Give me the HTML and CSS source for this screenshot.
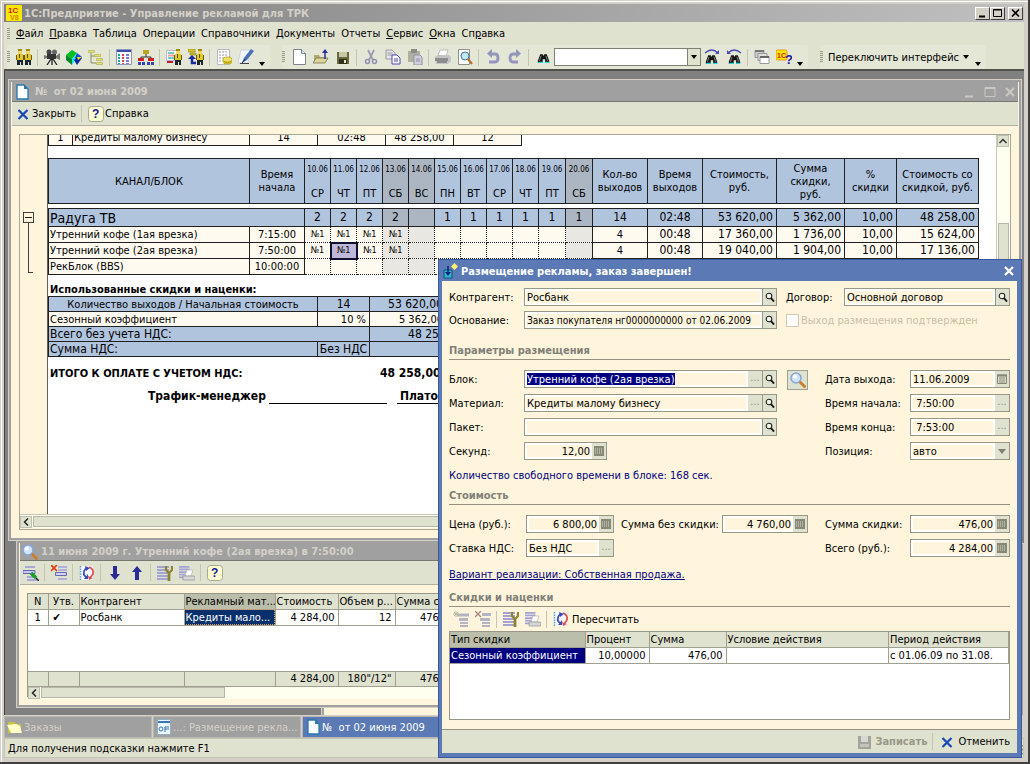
FILE: index.html
```html
<!DOCTYPE html>
<html lang="ru">
<head>
<meta charset="utf-8">
<title>1С:Предприятие - Управление рекламой для ТРК</title>
<link rel="stylesheet" href="styles.css">
</head>
<body>
<svg class="sprite" aria-hidden="true">
  <symbol id="man" viewBox="0 0 8 16"><path d="M1 5h6v6H1z" fill="#e0c828"/><path d="M0 6h1v5H0zM7 6h1v5H7z" fill="#6b5c00"/><path d="M1 11h6v5H5v-3H4v3H1z" fill="#1c2430"/><path d="M2 1h4v4H2z" fill="#f0d860"/><path d="M2 0h4v2H2z" fill="#a08a10"/><path d="M3 5h1v4H3z" fill="#585020"/></symbol>
  <symbol id="people" viewBox="0 0 16 16"><use href="#man" x="0" y="0" width="8" height="16"/><use href="#man" x="8" y="0" width="8" height="16"/></symbol>
  <symbol id="camera" viewBox="0 0 16 16"><circle cx="5" cy="3" r="2.5" fill="#444"/><circle cx="10.500" cy="3" r="2.500" fill="#666"/><path d="M3 5h9v5H3z" fill="#333"/><path d="M12 7l4-3v7l-4-2zM0 6l3 1v2l-3 1z" fill="#777"/><path d="M7 10L3 16M8 10v6M9 10l4 6" stroke="#222" stroke-width="1.300"/></symbol>
  <symbol id="cube" viewBox="0 0 16 16"><path d="M0 6l6-5 5 3-5 6z" fill="#00c020"/><path d="M0 6l6 4v6l-6-5z" fill="#008828"/><path d="M6 10l5-6v5l-5 7z" fill="#20e8f0"/><path d="M11 4l5 4-3 4-4-3z" fill="#1848e0"/><path d="M8 11l4-3 4 1-5 7z" fill="#0a28a0"/><path d="M11 8h5l-4 3z" fill="#f0e000"/></symbol>
  <symbol id="tree" viewBox="0 0 16 16"><path d="M3 4v10h5M3 7h5" fill="none" stroke="#8c8a60"/><path d="M.5 1.500h6v2h-6zM6.500 5.500h6v2h-6zM8.500 9.500h6v2h-6zM8.500 13.500h6v2h-6z" fill="#e6e268" stroke="#a8a650" stroke-width=".6"/></symbol>
  <symbol id="grid" viewBox="0 0 16 16"><path d="M.5.5h15v15H.5z" fill="#fff" stroke="#8c98c0"/><path d="M1 1h14v2H1z" fill="#3d4ba8"/><path d="M3 5v10" stroke="#20a898" stroke-width="2" stroke-dasharray="2 1"/><path d="M7 5v10" stroke="#d84050" stroke-width="2" stroke-dasharray="2 1"/><path d="M11.500 5v10" stroke="#8078d8" stroke-width="3" stroke-dasharray="2 1"/></symbol>
  <symbol id="org" viewBox="0 0 16 16"><path d="M8 4v4M3 11V8h10v3" fill="none" stroke="#333"/><path d="M5 1h6v4H5z" fill="#b8a820"/><path d="M0 9h6v3H0zM10 9h6v3h-6z" fill="#d02020"/><path d="M0 13h3v3H0zM4 13h3v3H4zM9 13h3v3H9zM13 13h3v3h-3z" fill="#3444c0"/></symbol>
  <symbol id="gridman" viewBox="0 0 16 16"><path d="M.5 1.500h10v10H.5z" fill="#fff" stroke="#b8b8d8"/><path d="M2 4h6M2 9h6" stroke="#70d0c0" stroke-width="2"/><path d="M2 6.500h6" stroke="#f0a0a8" stroke-width="2"/><path d="M1 13h6" stroke="#c02020" stroke-width="2"/><use href="#man" x="8" y="0" width="8" height="16"/></symbol>
  <symbol id="treeman" viewBox="0 0 16 16"><path d="M0 0h7v3H0zM2 4h6v2H2z" fill="#d6c62a" stroke="#8a7c10" stroke-width=".6"/><path d="M4 8v6h4" fill="none" stroke="#1828a0" stroke-width="2.500"/><path d="M0 10l4-4 4 4z" fill="#1828a0"/><use href="#man" x="8" y="0" width="8" height="16"/></symbol>
  <symbol id="listcoin" viewBox="0 0 16 16"><path d="M1.500.5h12v15h-12z" fill="#fff" stroke="#b8b8c4"/><path d="M3 3h9M3 6h9M3 9h5M3 12h4" stroke="#9898a8" stroke-dasharray="2 1"/><ellipse cx="11.500" cy="13" rx="4.500" ry="2.500" fill="#c8b420"/><ellipse cx="11.500" cy="10.500" rx="4.500" ry="2.500" fill="#f0e060" stroke="#a89010" stroke-width=".7"/></symbol>
  <symbol id="pen" viewBox="0 0 16 16"><path d="M3 1h9l-2 13H0z" fill="#f2f6fc" stroke="#b8c0d0" stroke-width=".6"/><path d="M13 0l3 2-7 9-5 3 2-5z" fill="#4870b8"/><path d="M4 14l3-4" stroke="#142850"/><path d="M2 14.500h9" stroke="#444"/></symbol>
  <symbol id="doc" viewBox="0 0 16 16"><path d="M2.500.5h8l4 4v11h-12z" fill="#fff" stroke="#7c8494"/><path d="M10.500.5v4h4" fill="#dde4ee" stroke="#7c8494"/></symbol>
  <symbol id="bluedoc" viewBox="0 0 16 16"><path d="M3 1h7l4 4v10H3z" fill="#fff" stroke="#2878b0" stroke-width="1.300"/><path d="M10 1v4h4z" fill="#2878b0"/></symbol>
  <symbol id="open" viewBox="0 0 16 16"><path d="M1 13V6h5l1 2h6v5z" fill="#b0aa70"/><path d="M0 14l3-5h12l-3 5z" fill="#d8d49c" stroke="#706c40" stroke-width=".7"/><path d="M12 10V3" stroke="#2830a0" stroke-width="1.500"/><path d="M9 4l3-4 3 4z" fill="#2830a0"/></symbol>
  <symbol id="save" viewBox="0 0 16 16"><path d="M2 3h12v12H2z" fill="#68683c"/><path d="M4 3h8v5H4z" fill="#c8c8a8"/><path d="M4 10h8v5H4z" fill="#303018"/><path d="M9 11h2v3H9z" fill="#e8e8d8"/></symbol>
  <symbol id="cut" viewBox="0 0 16 16"><path d="M5 1l5 10M11 1L6 11" stroke="#9a9aae" stroke-width="1.700"/><circle cx="4.500" cy="12.500" r="2" fill="none" stroke="#9090b0" stroke-width="1.500"/><circle cx="11.500" cy="12.500" r="2" fill="none" stroke="#9090b0" stroke-width="1.500"/></symbol>
  <symbol id="copy" viewBox="0 0 16 16"><path d="M1 1h6l3 3v6H1z" fill="#e6e6e6" stroke="#9a9a9a"/><path d="M2.500 4h5M2.500 6h5" stroke="#9a9a9a"/><path d="M7 6h5l3 3v6H7z" fill="#fff" stroke="#4848b0"/><path d="M9 10h4M9 12h4" stroke="#4848b0"/></symbol>
  <symbol id="paste" viewBox="0 0 16 16"><path d="M1 2h12v11H1z" fill="#b0b0a0"/><path d="M4 0h6v4H4z" fill="#8c8c80"/><path d="M7 6h6l2 2v8H7z" fill="#d0d0dc" stroke="#9090a8"/><path d="M9 10h4M9 12h4" stroke="#9090a8"/></symbol>
  <symbol id="print" viewBox="0 0 16 16"><path d="M5 1h8l-2 6H3z" fill="#fff" stroke="#aaa" stroke-width=".7"/><path d="M0 8l3-2h11l2 2v4l-3 3H1z" fill="#c4c4c4"/><path d="M0 9h13v3H0z" fill="#8c8c8c"/><path d="M2 13h10" stroke="#555"/></symbol>
  <symbol id="preview" viewBox="0 0 16 16"><path d="M1.500.5h11v15h-11z" fill="#fff" stroke="#909090"/><circle cx="8" cy="7" r="4" fill="#b8ecf0" stroke="#507090"/><path d="M11 10l4 5" stroke="#c07030" stroke-width="2.200"/></symbol>
  <symbol id="undo" viewBox="0 0 16 16"><path d="M7 0v9L2 4.500z" fill="#9494bc"/><path d="M6 5h4q3 0 3 4t-3 4H4" fill="none" stroke="#9494bc" stroke-width="2.800"/></symbol>
  <symbol id="redo" viewBox="0 0 16 16"><path d="M9 0v9l5-4.500z" fill="#9494bc"/><path d="M10 5H6q-3 0-3 4t3 4h5" fill="none" stroke="#9494bc" stroke-width="2.800"/></symbol>
  <symbol id="bino" viewBox="0 0 16 16"><path d="M4 4h3l1 2 1-2h3l3 8v2h-5v-4H7v4H1v-2z" fill="#141414"/><path d="M5 6l-2 6M11 6l2 6" stroke="#999"/><path d="M2 14h5M10 14h5" stroke="#18d8e0" stroke-width="1.500"/></symbol>
  <symbol id="binor" viewBox="0 0 16 16"><use href="#bino" x="1" y="3" width="13" height="13"/><path d="M1 4q7-6 13 0" fill="none" stroke="#4848b8" stroke-width="1.200"/><path d="M15 1v4h-4z" fill="#4848b8"/></symbol>
  <symbol id="binol" viewBox="0 0 16 16"><use href="#bino" x="2" y="3" width="13" height="13"/><path d="M2 4q6-6 13 0" fill="none" stroke="#4848b8" stroke-width="1.200"/><path d="M1 1v4h4z" fill="#4848b8"/></symbol>
  <symbol id="wins" viewBox="0 0 16 16"><path d="M1 1.500h9v7H1z" fill="#ccc" stroke="#999"/><path d="M1 1h9v2H1z" fill="#777"/><path d="M4 4.500h9v7H4z" fill="#ddd" stroke="#999"/><path d="M6 7.500h9v7H6z" fill="#fff" stroke="#999"/><path d="M6 7h9v2H6z" fill="#666"/></symbol>
  <symbol id="onecq" viewBox="0 0 16 16"><rect x="0" y="1" width="11" height="10" rx="1.500" fill="#ffe600" stroke="#e08a00" stroke-width=".8"/><text x="1" y="9" class="logo-s">1С</text><text x="9" y="15" class="logo-q">?</text></symbol>
  <symbol id="onec" viewBox="0 0 16 16"><rect width="16" height="16" rx="1" fill="#ffe600"/><text x="2" y="8" class="logo-t">1С</text><text x="4" y="15" class="logo-v">V8</text></symbol>
  <symbol id="cross" viewBox="0 0 16 16"><path d="M3.500 4l9 9M12.500 4l-9 9" stroke="currentColor" stroke-width="2.200"/></symbol>
  <symbol id="help" viewBox="0 0 16 16"><rect x=".5" y=".5" width="15" height="15" rx="3" fill="#ffffd0" stroke="#a8a898"/><text x="4" y="12" class="helpq">?</text></symbol>
  <symbol id="mag" viewBox="0 0 16 16"><path d="M9.500 9.500l5 5" stroke="#c88030" stroke-width="3" stroke-linecap="round"/><circle cx="6" cy="6" r="5" fill="#cfe4ff" stroke="#88a4d8" stroke-width="1.500"/><circle cx="5" cy="4.500" r="2" fill="#fff"/></symbol>
  <symbol id="lens" viewBox="0 0 10 10"><circle cx="4" cy="4" r="2.800" fill="#f4f4ea" stroke="#222" stroke-width="1.100"/><path d="M6 6l3 3.500" stroke="#111" stroke-width="1.900"/></symbol>
  <symbol id="rows" viewBox="0 0 16 16"><path d="M0 2h12M0 5h12M0 8h12M0 11h12M0 14h12" stroke="#a4a4d4" stroke-width="2"/></symbol>
  <symbol id="editrow" viewBox="0 0 16 16"><path d="M2 2h10M4 12h8M4 15h10" stroke="#a8a8d8" stroke-width="2"/><path d="M0 5.500h12v3H0z" fill="#c8c8ec" stroke="#6868b0"/><path d="M8 8l5 5" stroke="#18a028" stroke-width="3.500"/><path d="M13 13l3 3" stroke="#222" stroke-width="1.500"/></symbol>
  <symbol id="delrow" viewBox="0 0 16 16"><path d="M7 2h9M7 5h9M7 14h9" stroke="#b0b0dc" stroke-width="2"/><path d="M4.500 7.500h11v3h-11z" fill="#d0d0f0" stroke="#6868b0"/><path d="M0 0l6 6M6 0L0 6" stroke="#e03c10" stroke-width="1.700"/></symbol>
  <symbol id="addrowd" viewBox="0 0 16 16"><path d="M4 2.500h12v3H4zM6 7h9v3H6zM7 11h8v2H7zM7 14h8v2H7z" fill="#b4b4c4"/><path d="M0 3h6M3 0v6M1 1l4 4M5 1L1 5" stroke="#bcbc9c"/></symbol>
  <symbol id="delrowd" viewBox="0 0 16 16"><path d="M7 2h9v3H7zM5 7h10v3H5zM7 11h8v2H7zM7 14h8v2H7z" fill="#b4b4c4"/><path d="M0 0l6 6M6 0L0 6" stroke="#a88c84" stroke-width="1.400"/></symbol>
  <symbol id="refresh" viewBox="0 0 16 16"><path d="M1 1h13v14H1z" fill="#f8faff"/><path d="M1.500 1v14" stroke="#5aa0d0" stroke-width="1.500" stroke-dasharray="1.500 1"/><path d="M8 3Q4 5 5 10l3 3" fill="none" stroke="#3848c0" stroke-width="1.700"/><path d="M6 1l5 2-4 3zM5 14l4 0V9z" fill="#3848c0"/><path d="M10 2q5 2 4 7l-3 4" fill="none" stroke="#e05050" stroke-width="1.700"/><path d="M9 11l1 4 4-2z" fill="#e05050"/></symbol>
  <symbol id="down" viewBox="0 0 16 16"><path d="M6 1h4v8h3l-5 6-5-6h3z" fill="#2a2a98"/></symbol>
  <symbol id="up" viewBox="0 0 16 16"><path d="M6 15h4V7h3L8 1 3 7h3z" fill="#2a2a98"/></symbol>
  <symbol id="wrench" viewBox="0 0 16 16"><use href="#rows" width="16" height="16"/><path d="M12 7v9" stroke="#8c8430" stroke-width="2.800"/><path d="M9 1v4l3 3 3-3V1" fill="none" stroke="#8c8430" stroke-width="2.200"/></symbol>
  <symbol id="rowprint" viewBox="0 0 16 16"><use href="#rows" width="14" height="14"/><path d="M8 5h6l-2 6H6z" fill="#fff" stroke="#aaa" stroke-width=".6"/><path d="M4 11h11l1 1v3H4z" fill="#d4d8d8" stroke="#909090" stroke-width=".7"/></symbol>
  <symbol id="calc" viewBox="0 0 10 10"><path d="M0 0h10v10H0z" fill="#888878"/><path d="M1 3h8M1 5h8M1 7h8" stroke="#ddddc8" stroke-dasharray="1 1"/></symbol>
  <symbol id="cal" viewBox="0 0 10 10"><path d="M.5 1h9v8.500h-9z" fill="#d6d6c2" stroke="#888878"/><path d="M0 1.500h10" stroke="#888878" stroke-width="2"/><path d="M3 3v6M5 3v6M7 3v6" stroke="#888878" stroke-width=".8"/></symbol>
  <symbol id="folder" viewBox="0 0 16 16"><path d="M1 3h6l2 2h5v9H1z" fill="#c8c440"/><path d="M0 6l4 8h11l-2-7-4-2z" fill="#ffffc8"/></symbol>
  <symbol id="form" viewBox="0 0 16 16"><path d="M1.500.5h13v15h-13z" fill="#eef8ff" stroke="#90b0c8"/><path d="M2 3h12" stroke="#3478b8" stroke-width="2"/><circle cx="5" cy="10" r="2" fill="none" stroke="#3478b8"/><path d="M9 8h4M9 8v5M9 10h4" stroke="#3478b8"/></symbol>
  <symbol id="disk" viewBox="0 0 16 16"><path d="M2 2h13v13H2z" fill="#a4a49c"/><path d="M5 2h7v6H5z" fill="#d8d8d0"/><path d="M4 10h9v3H4z" fill="#c4c4bc"/></symbol>
  <symbol id="place" viewBox="0 0 16 16"><path d="M1 7h8v8H1z" fill="#30b8c8" stroke="#105080"/><path d="M5 3v8" stroke="#102080" stroke-width="1.500"/><path d="M2 9l3 4 3-4z" fill="#102080"/><path d="M11.500 0L15 3.500 11.500 7 8 3.500z" fill="#f8f070"/></symbol>
</svg>

<main class="app">
  <header class="titlebar">
    <svg class="ic"><use href="#onec"/></svg>
    <h1 class="caption">1С:Предприятие - Управление рекламой для ТРК</h1>
    <div class="winbtns">
      <button aria-label="Свернуть"><svg viewBox="0 0 15 13"><path d="M4 9.500h6" stroke="#000" stroke-width="2"/></svg></button>
      <button aria-label="Развернуть"><svg viewBox="0 0 15 13"><path d="M3.500 2.500h8v7h-8zM3 3h9" fill="none" stroke="#000"/></svg></button>
      <button class="closebtn" aria-label="Закрыть окно"><svg viewBox="0 0 15 13"><path d="M4 2.500l7 7M11 2.500l-7 7" stroke="#000" stroke-width="1.600"/></svg></button>
    </div>
  </header>

  <nav class="menubar">
    <span class="grip"></span>
    <button><u>Ф</u>айл</button><button><u>П</u>равка</button><button>Таблица</button><button>Операции</button><button>Справочники</button><button>Документы</button><button>Отчеты</button><button><u>С</u>ервис</button><button><u>О</u>кна</button><button>Сп<u>р</u>авка</button>
  </nav>

  <div class="toolrow">
    <div class="tools">
      <span class="grip"></span>
      <button class="tb" aria-label="Контрагенты"><svg class="ic"><use href="#people"/></svg></button><i class="sep"></i>
      <button class="tb" aria-label="Материалы"><svg class="ic"><use href="#camera"/></svg></button>
      <button class="tb" aria-label="Блоки"><svg class="ic"><use href="#cube"/></svg></button>
      <button class="tb" aria-label="Дерево"><svg class="ic"><use href="#tree"/></svg></button><i class="sep"></i>
      <button class="tb" aria-label="Сетка"><svg class="ic"><use href="#grid"/></svg></button>
      <button class="tb" aria-label="Структура"><svg class="ic"><use href="#org"/></svg></button><i class="sep"></i>
      <button class="tb" aria-label="Заказы"><svg class="ic"><use href="#gridman"/></svg></button>
      <button class="tb" aria-label="Размещение"><svg class="ic"><use href="#treeman"/></svg></button><i class="sep"></i>
      <button class="tb" aria-label="Оплаты"><svg class="ic"><use href="#listcoin"/></svg></button>
      <button class="tb" aria-label="Правка"><svg class="ic"><use href="#pen"/></svg></button>
      <button class="more" aria-label="Ещё"></button>
    </div>
    <div class="tools">
      <span class="grip"></span>
      <button class="tb" aria-label="Новый"><svg class="ic"><use href="#doc"/></svg></button>
      <button class="tb" aria-label="Открыть"><svg class="ic"><use href="#open"/></svg></button>
      <button class="tb" aria-label="Сохранить"><svg class="ic"><use href="#save"/></svg></button><i class="sep"></i>
      <button class="tb" aria-label="Вырезать"><svg class="ic"><use href="#cut"/></svg></button>
      <button class="tb" aria-label="Копировать"><svg class="ic"><use href="#copy"/></svg></button>
      <button class="tb" aria-label="Вставить"><svg class="ic"><use href="#paste"/></svg></button><i class="sep"></i>
      <button class="tb" aria-label="Печать"><svg class="ic"><use href="#print"/></svg></button>
      <button class="tb" aria-label="Просмотр"><svg class="ic"><use href="#preview"/></svg></button><i class="sep"></i>
      <button class="tb" aria-label="Отменить действие"><svg class="ic"><use href="#undo"/></svg></button>
      <button class="tb" aria-label="Повторить"><svg class="ic"><use href="#redo"/></svg></button><i class="sep"></i>
      <button class="tb" aria-label="Найти"><svg class="ic small"><use href="#bino"/></svg></button>
      <span class="combo"><input aria-label="Поиск"><button aria-label="Список"></button></span>
      <button class="tb" aria-label="Найти далее"><svg class="ic"><use href="#binor"/></svg></button>
      <button class="tb" aria-label="Найти ранее"><svg class="ic"><use href="#binol"/></svg></button><i class="sep"></i>
      <button class="tb" aria-label="Окна"><svg class="ic"><use href="#wins"/></svg></button>
      <button class="tb" aria-label="Помощь"><svg class="ic"><use href="#onecq"/></svg></button>
      <button class="more" aria-label="Ещё"></button>
    </div>
    <div class="tools">
      <span class="grip"></span>
      <button class="switch">Переключить интерфейс</button>
      <button class="more" aria-label="Ещё"></button>
    </div>
  </div>

  <section class="mdi">
    <div class="win back"></div>

    <article class="win doc">
      <header class="wintitle"><svg class="ic"><use href="#bluedoc"/></svg><h2>№&nbsp; от 02 июня 2009</h2>
        <div class="flatbtns">
          <button aria-label="Свернуть документ"><svg viewBox="0 0 12 12"><path d="M1 10.500h8" stroke="#ccc8c0" stroke-width="2"/></svg></button>
          <button aria-label="Развернуть документ"><svg viewBox="0 0 12 12"><path d="M1 1.500h10v9H1zM1 2.500h10" fill="none" stroke="#ccc8c0"/></svg></button>
          <button aria-label="Закрыть документ"><svg viewBox="0 0 12 12"><path d="M2 2l8 8M10 2l-8 8" stroke="#ccc8c0" stroke-width="2"/></svg></button>
        </div>
      </header>
      <div class="winbar">
        <button class="txt first"><svg class="ic blue"><use href="#cross"/></svg>Закрыть</button><i class="sep"></i>
        <button class="txt tight"><svg class="ic"><use href="#help"/></svg>Справка</button>
      </div>
      <div class="docbody">
        <div class="sheetbox">
          <div class="outline"><button aria-label="Свернуть группу"></button><i></i></div>
          <div class="sheet">
            <table class="cells cut">
              <colgroup><col class="c24"><col class="c177"><col class="c68"><col class="c68"><col class="c68"><col class="c68"></colgroup>
              <tr><td class="c">1</td><td>Кредиты малому бизнесу</td><td class="c">14</td><td class="c">02:48</td><td class="c">48 258,00</td><td class="c">12</td></tr>
            </table>
            <table class="cells plan">
              <colgroup><col class="c201"><col class="c55"><col span="9" class="c26"><col span="2" class="c27"><col class="c55"><col class="c55"><col class="c74"><col class="c68"><col class="c52"><col class="c82"></colgroup>
              <thead>
                <tr><th>КАНАЛ/БЛОК</th><th>Время начала</th>
                  <th class="d"><span>10.06</span>СР</th><th class="d"><span>11.06</span>ЧТ</th><th class="d"><span>12.06</span>ПТ</th><th class="d we"><span>13.06</span>СБ</th><th class="d we"><span>14.06</span>ВС</th><th class="d"><span>15.06</span>ПН</th><th class="d"><span>16.06</span>ВТ</th><th class="d"><span>17.06</span>СР</th><th class="d"><span>18.06</span>ЧТ</th><th class="d"><span>19.06</span>ПТ</th><th class="d we"><span>20.06</span>СБ</th>
                  <th>Кол-во выходов</th><th>Время выходов</th><th>Стоимость, руб.</th><th>Сумма<br>скидки,<br>руб.</th><th>%<br>скидки</th><th>Стоимость со скидкой, руб.</th></tr>
              </thead>
              <tbody>
                <tr class="gap"><td colspan="19"></td></tr>
                <tr class="sum"><td colspan="2" class="big">Радуга ТВ</td><td>2</td><td>2</td><td>2</td><td class="we">2</td><td class="we"></td><td>1</td><td>1</td><td>1</td><td>1</td><td>1</td><td class="we">1</td><td>14</td><td>02:48</td><td class="r">53 620,00</td><td class="r">5 362,00</td><td class="r">10,00</td><td class="r">48 258,00</td></tr>
                <tr class="row"><td>Утренний кофе (1ая врезка)</td><td class="c">7:15:00</td><td class="n">№1</td><td class="n">№1</td><td class="n">№1</td><td class="n we">№1</td><td class="n we"></td><td class="n"></td><td class="n"></td><td class="n"></td><td class="n"></td><td class="n"></td><td class="n we"></td><td class="c">4</td><td class="c v">00:48</td><td class="r v">17 360,00</td><td class="r v">1 736,00</td><td class="r v">10,00</td><td class="r v">15 624,00</td></tr>
                <tr class="row"><td>Утренний кофе (2ая врезка)</td><td class="c">7:50:00</td><td class="n">№1</td><td class="n cur">№1</td><td class="n">№1</td><td class="n we">№1</td><td class="n we"></td><td class="n"></td><td class="n"></td><td class="n"></td><td class="n"></td><td class="n"></td><td class="n we"></td><td class="c">4</td><td class="c v">00:48</td><td class="r v">19 040,00</td><td class="r v">1 904,00</td><td class="r v">10,00</td><td class="r v">17 136,00</td></tr>
                <tr class="row"><td>РекБлок (BBS)</td><td class="c">10:00:00</td><td class="n"></td><td class="n"></td><td class="n"></td><td class="n we"></td><td class="n we"></td><td class="n"></td><td class="n"></td><td class="n"></td><td class="n"></td><td class="n"></td><td class="n we"></td><td></td><td></td><td></td><td></td><td></td><td></td></tr>
              </tbody>
            </table>
            <h3 class="sh">Использованные скидки и наценки:</h3>
            <table class="cells totals">
              <colgroup><col class="c269"><col class="c52"><col class="c77"><col class="c20"></colgroup>
              <tr class="b"><td class="c">Количество выходов / Начальная стоимость</td><td class="c v">14</td><td class="r v">53 620,00</td><td></td></tr>
              <tr><td>Сезонный коэффициент</td><td class="r">10 %</td><td class="r">5 362,00</td><td></td></tr>
              <tr class="b"><td colspan="2" class="v">Всего без учета НДС:</td><td colspan="2" class="r v">48 258,00</td></tr>
              <tr class="b"><td class="v">Сумма НДС:</td><td class="v c">Без НДС</td><td colspan="2"></td></tr>
            </table>
            <p class="grand"><b>ИТОГО К ОПЛАТЕ С УЧЕТОМ НДС:</b><b class="v">48 258,00</b></p>
            <p class="sign"><b>Трафик-менеджер</b><i></i><b class="payer">Платов</b></p>
          </div>
          <div class="vscroll"><button aria-label="Вверх"><svg viewBox="0 0 12 12"><path d="M2.500 8L6 4.500 9.500 8" fill="none" stroke="#333" stroke-width="1.500"/></svg></button><span></span></div>
          <div class="hscroll"><button aria-label="Влево"><svg viewBox="0 0 12 12"><path d="M8 2.500L4.500 6 8 9.500" fill="none" stroke="#222" stroke-width="1.500"/></svg></button><span></span></div>
        </div>
      </div>
    </article>

    <article class="win list">
      <header class="wintitle"><svg class="ic"><use href="#mag"/></svg><h2>11 июня 2009 г. Утренний кофе (2ая врезка) в 7:50:00</h2></header>
      <div class="winbar">
        <button class="tb" aria-label="Изменить"><svg class="ic"><use href="#editrow"/></svg></button><i class="sep"></i>
        <button class="tb" aria-label="Удалить"><svg class="ic"><use href="#delrow"/></svg></button><i class="sep"></i>
        <button class="tb" aria-label="Обновить"><svg class="ic"><use href="#refresh"/></svg></button><i class="sep"></i>
        <button class="tb" aria-label="Вниз"><svg class="ic"><use href="#down"/></svg></button>
        <button class="tb" aria-label="Вверх по списку"><svg class="ic"><use href="#up"/></svg></button><i class="sep"></i>
        <button class="tb" aria-label="Настройка"><svg class="ic"><use href="#wrench"/></svg></button>
        <button class="tb" aria-label="Вывести"><svg class="ic"><use href="#rowprint"/></svg></button><i class="sep"></i>
        <button class="tb" aria-label="Справка по списку"><svg class="ic"><use href="#help"/></svg></button>
      </div>
      <div class="listbody">
        <div class="listbox">
          <table class="grid">
            <colgroup><col class="c20"><col class="c31"><col class="c105"><col class="c91"><col class="c63"><col class="c57"><col class="c63"><col></colgroup>
            <thead><tr><th class="c">N</th><th class="c">Утв.</th><th>Контрагент</th><th class="act">Рекламный мат...</th><th>Стоимость</th><th>Объем р...</th><th>Сумма ск...</th><th></th></tr></thead>
            <tbody><tr><td class="c">1</td><td class="tick">✔</td><td>Росбанк</td><td class="sel">Кредиты мало...</td><td class="r">4 284,00</td><td class="r">12</td><td class="r">476,00</td><td></td></tr></tbody>
            <tfoot><tr class="blank"><td colspan="8"></td></tr><tr><td></td><td></td><td></td><td></td><td class="r">4 284,00</td><td class="r">180"/12"</td><td class="r">476,00</td><td></td></tr></tfoot>
          </table>
          <div class="hscroll part"><button aria-label="Влево по списку"><svg viewBox="0 0 12 12"><path d="M8 2.500L4.500 6 8 9.500" fill="none" stroke="#222" stroke-width="1.500"/></svg></button><span></span></div>
        </div>
      </div>
    </article>
  </section>

  <nav class="taskbar">
    <button><svg class="ic"><use href="#folder"/></svg>Заказы</button>
    <button><svg class="ic"><use href="#form"/></svg>...: Размещение рекла...</button>
    <button class="on"><svg class="ic"><use href="#bluedoc"/></svg>№&nbsp; от 02 июня 2009</button>
  </nav>
  <footer class="status"><span>Для получения подсказки нажмите F1</span>
    <svg viewBox="0 0 12 12"><path d="M0 12L12 0M4 12l8-8M8 12l4-4" stroke="#8a8878" stroke-width="1.500"/></svg></footer>

  <form class="dialog" onsubmit="return false">
    <header class="dlgtitle"><svg class="ic"><use href="#place"/></svg><h2>Размещение рекламы, заказ завершен!</h2>
      <button type="button" aria-label="Закрыть форму"><svg viewBox="0 0 12 12"><path d="M2 2l8 8M10 2l-8 8" stroke="#fff" stroke-width="2.200"/></svg></button></header>
    <div class="dlgbody">
      <div class="top">
        <label for="f1">Контрагент:</label>
        <span class="field"><input id="f1" value="Росбанк"><button type="button" aria-label="Открыть контрагента"><svg><use href="#lens"/></svg></button></span>
        <label for="f2">Договор:</label>
        <span class="field"><input id="f2" value="Основной договор"><button type="button" aria-label="Открыть договор"><svg><use href="#lens"/></svg></button></span>
        <label for="f3">Основание:</label>
        <span class="field long"><input id="f3" value="Заказ покупателя нг0000000000 от 02.06.2009"><button type="button" aria-label="Открыть основание"><svg><use href="#lens"/></svg></button></span>
        <label class="check"><input type="checkbox" disabled>Выход размещения подтвержден</label>
      </div>

      <h3>Параметры размещения</h3>
      <div class="params">
        <div class="pl">
          <label for="p1">Блок:</label>
          <span class="field"><input id="p1" value="Утренний кофе (2ая врезка)"><button type="button" class="dots" aria-label="Выбрать блок">...</button><button type="button" aria-label="Открыть блок"><svg><use href="#lens"/></svg></button></span>
          <label for="p2">Материал:</label>
          <span class="field"><input id="p2" value="Кредиты малому бизнесу"><button type="button" class="dots" aria-label="Выбрать материал">...</button><button type="button" aria-label="Открыть материал"><svg><use href="#lens"/></svg></button></span>
          <label for="p3">Пакет:</label>
          <span class="field"><input id="p3"><button type="button" aria-label="Открыть пакет"><svg><use href="#lens"/></svg></button></span>
          <label for="p4">Секунд:</label>
          <span class="field num short"><input id="p4" value="12,00"><button type="button" class="dim" aria-label="Калькулятор секунд"><svg><use href="#calc"/></svg></button></span>
        </div>
        <button type="button" class="find" aria-label="Найти блок"><svg class="ic"><use href="#mag"/></svg></button>
        <div class="pr">
          <label for="q1">Дата выхода:</label>
          <span class="field"><input id="q1" value="11.06.2009"><button type="button" class="dim" aria-label="Календарь"><svg><use href="#cal"/></svg></button></span>
          <label for="q2">Время начала:</label>
          <span class="field"><input id="q2" value=" 7:50:00"><button type="button" class="dots" aria-label="Выбрать начало">...</button></span>
          <label for="q3">Время конца:</label>
          <span class="field"><input id="q3" value=" 7:53:00"><button type="button" class="dots" aria-label="Выбрать конец">...</button></span>
          <label for="q4">Позиция:</label>
          <span class="field pick"><select id="q4"><option>авто</option></select></span>
        </div>
      </div>
      <p class="info">Количество свободного времени в блоке: 168 сек.</p>

      <h3>Стоимость</h3>
      <div class="cost">
        <label for="c1">Цена (руб.):</label>
        <span class="field num"><input id="c1" value="6 800,00"><button type="button" class="dim" aria-label="Калькулятор цены"><svg><use href="#calc"/></svg></button></span>
        <label for="c2">Сумма без скидки:</label>
        <span class="field num"><input id="c2" value="4 760,00"><button type="button" class="dim" aria-label="Калькулятор суммы"><svg><use href="#calc"/></svg></button></span>
        <label for="c3">Сумма скидки:</label>
        <span class="field num"><input id="c3" value="476,00"><button type="button" class="dim" aria-label="Калькулятор скидки"><svg><use href="#calc"/></svg></button></span>
        <label for="c4">Ставка НДС:</label>
        <span class="field"><input id="c4" value="Без НДС"><button type="button" class="dots" aria-label="Выбрать ставку">...</button></span>
        <label for="c5" class="col5">Всего (руб.):</label>
        <span class="field num"><input id="c5" value="4 284,00"><button type="button" class="dim" aria-label="Калькулятор итога"><svg><use href="#calc"/></svg></button></span>
      </div>
      <p class="variant"><a href="#">Вариант реализации: Собственная продажа.</a></p>

      <h3>Скидки и наценки</h3>
      <div class="dtools">
        <button type="button" class="tb" aria-label="Добавить"><svg class="ic"><use href="#addrowd"/></svg></button>
        <button type="button" class="tb" aria-label="Удалить скидку"><svg class="ic"><use href="#delrowd"/></svg></button><i class="sep"></i>
        <button type="button" class="tb" aria-label="Настройка списка"><svg class="ic"><use href="#wrench"/></svg></button>
        <button type="button" class="tb" aria-label="Вывести список"><svg class="ic"><use href="#rowprint"/></svg></button><i class="sep"></i>
        <button type="button" class="txt"><svg class="ic"><use href="#refresh"/></svg>Пересчитать</button>
      </div>
      <div class="dgrid">
        <table class="grid">
          <colgroup><col class="c135"><col class="c64"><col class="c77"><col><col class="c120"></colgroup>
          <thead><tr><th class="act">Тип скидки</th><th>Процент</th><th>Сумма</th><th>Условие действия</th><th>Период действия</th></tr></thead>
          <tbody><tr><td class="sel">Сезонный коэффициент</td><td class="r">10,00000</td><td class="r">476,00</td><td></td><td>с 01.06.09 по 31.08.</td></tr></tbody>
        </table>
      </div>
    </div>
    <footer class="dlgfoot">
      <button type="button" class="txt off" disabled><svg class="ic"><use href="#disk"/></svg>Записать</button><i class="sep"></i>
      <button type="button" class="txt"><svg class="ic blue"><use href="#cross"/></svg>Отменить</button>
    </footer>
  </form>
</main>
<script src="app.js"></script>
</body>
</html>
```
FILE: app.js
```js
const block = document.getElementById("p1");
block.focus({ preventScroll: true });
block.select();
```
FILE: styles.css
```css
* { box-sizing: border-box; }
html, body { height: 100%; margin: 0; }
body { font: 11px/13px "DejaVu Sans Condensed", "Noto Sans", sans-serif; color: #000; overflow: hidden; }
h1, h2, h3, p { margin: 0; font-size: 11px; }
button, input, select { font: inherit; color: inherit; margin: 0; padding: 0; border: 0; background: none; border-radius: 0; }
button { display: inline-flex; align-items: center; justify-content: center; white-space: nowrap; }
.sprite { display: none; }
.ic { width: 16px; height: 16px; flex: none; display: block; }
.small { width: 13px; height: 13px; }
.blue { color: #1848b8; }
.logo-t { font: bold 8px "Liberation Sans", sans-serif; fill: #d81818; }
.logo-v { font: bold 7px "Liberation Sans", sans-serif; fill: #c89000; }
.logo-s { font: bold 7px "Liberation Sans", sans-serif; fill: #d81818; }
.logo-q { font: bold 13px "Liberation Sans", sans-serif; fill: #2020a0; }
.helpq { font: bold 12px "Liberation Sans", sans-serif; fill: #1818a0; }
::selection { background: #000080; color: #fff; }

/* application frame */
.app { position: relative; height: 100%; display: flex; flex-direction: column; padding: 4px; background: #d4d0c8; border-right: 2px solid #404040; border-bottom: 2px solid #404040; box-shadow: inset 1px 1px #d4d0c8, inset 2px 2px #fff; }
.titlebar { height: 18px; flex: none; display: flex; align-items: center; padding: 0 1px 0 2px; background: linear-gradient(90deg, #808080, #c0c0c0); color: #d4d0c8; }
.caption { flex: 1; padding-left: 2px; white-space: nowrap; }
.winbtns { display: flex; }
.winbtns button { width: 15px; height: 13px; background: #d4d0c8; border: 1px solid; border-color: #fff #404040 #404040 #fff; }
.winbtns svg { width: 15px; height: 13px; flex: none; }
.winbtns .closebtn { margin-left: 3px; }
.menubar { height: 23px; flex: none; display: flex; align-items: center; gap: 6px; padding-left: 3px; background: #e0e2d0; }
.grip { width: 3px; height: 12px; flex: none; background: repeating-linear-gradient(#9c9c8c 0 1px, #e0e2d0 1px 2px); }
.toolrow { height: 26px; flex: none; display: flex; align-items: center; gap: 12px; padding-left: 3px; background: #e0e2d0; border-bottom: 2px solid #50504c; }
.tools { display: flex; align-items: center; height: 24px; background: #e4e6d6; padding-right: 3px; border-radius: 2px; }
.tools .grip { margin-right: 3px; }
.tb { width: 22px; height: 20px; flex: none; }
.sep { width: 1px; height: 17px; flex: none; margin: 0 3px 0 2px; background: #c4c4b4; }
.more { width: 10px; height: 20px; padding-top: 13px; }
.more::after, .combo button::after, .switch::after { content: ""; border: 3px solid transparent; border-top: 4px solid #000; border-bottom: 0; }
.combo { display: flex; width: 147px; height: 18px; border: 1px solid #808070; background: #fff; }
.combo input { flex: 1; min-width: 0; }
.combo button { width: 13px; background: #e0e2d0; border-left: 1px solid #808070; }
.switch { gap: 4px; padding: 0 4px 0 2px; }

/* workspace windows */
.mdi { position: relative; flex: 1; min-height: 0; background: #808080; border-left: 1px solid #404040; overflow: hidden; }
.win { position: absolute; display: flex; flex-direction: column; background: #fff5dc; border: 1px solid #d4d0c8; overflow: hidden; box-shadow: inset 0 0 0 2px #a0a0a0; padding: 2px 3px; }
.back { left: 316px; right: 0; top: 472px; bottom: -4px; }
.doc { left: 3px; right: 2px; top: 8px; bottom: 174px; }
.list { left: 11px; right: 16px; top: 469px; bottom: 7px; }
.wintitle { height: 20px; flex: none; display: flex; align-items: center; gap: 3px; background: #a0a0a0; color: #d4d0c8; padding: 0 2px; border-bottom: 1px solid #787870; }
.list .wintitle { height: 18px; }
.doc .wintitle { gap: 5px; }
.wintitle h2 { flex: 1; white-space: nowrap; }
.flatbtns { display: flex; gap: 8px; }
.flatbtns button, .flatbtns svg { width: 12px; height: 12px; }
.winbar { height: 24px; flex: none; display: flex; align-items: center; background: #e0e2d0; border-bottom: 1px solid #b0b0a0; }
.txt { gap: 3px; padding: 0 3px; }
.winbar .first { gap: 1px; }
.tight { gap: 1px; }
.docbody { flex: 1; min-height: 0; padding: 8px 7px; }
.sheetbox { height: 100%; display: grid; grid-template: minmax(0, 1fr) 15px / 28px minmax(0, 1fr) 14px; border: 1px solid #a8a898; }
.outline { border-right: 1px solid #606060; background: #fff5dc; padding: 77px 0 0 3px; }
.outline button { display: flex; width: 11px; height: 11px; border: 1px solid #404040; background: #fff5dc; }
.outline button::after { content: ""; width: 7px; height: 1px; background: #202020; }
.outline i { display: block; width: 5px; height: 50px; margin-left: 5px; border: solid #404040; border-width: 0 0 1px 1px; }
.sheet { background: #fff; overflow: hidden; white-space: nowrap; }
.vscroll { background: #fffff0; border-left: 1px solid #c8c8b8; display: flex; flex-direction: column; }
.vscroll button, .hscroll button { width: 12px; height: 12px; flex: none; background: #e0e2d0; border: 1px solid #c0c0b0; }
.vscroll svg, .hscroll svg { width: 12px; height: 12px; flex: none; }
.vscroll span { margin: 76px 1px 0; flex: 1; background: #e0e2d0; border: 1px solid #b8b8a8; }
.hscroll { grid-column: 1 / -1; display: flex; align-items: center; gap: 1px; height: 14px; background: #fffff0; border-top: 1px solid #c8c8b8; }
.hscroll span { flex: 1; height: 11px; background: #e0e2d0; border: 1px solid #b8b8a8; }
.hscroll.part span { flex: none; width: 184px; }

/* spreadsheet */
table { border-collapse: collapse; table-layout: fixed; }
.c20 { width: 20px; } .c24 { width: 24px; } .c26 { width: 26px; } .c27 { width: 27px; } .c31 { width: 31px; } .c52 { width: 52px; } .c55 { width: 55px; } .c57 { width: 57px; } .c63 { width: 63px; } .c64 { width: 64px; } .c68 { width: 68px; } .c74 { width: 74px; } .c77 { width: 77px; } .c82 { width: 82px; } .c91 { width: 91px; } .c105 { width: 105px; } .c120 { width: 120px; } .c135 { width: 135px; } .c177 { width: 177px; } .c201 { width: 201px; } .c269 { width: 269px; }
.cells td, .cells th { border: 1px solid #202020; padding: 0 1px; height: 16px; line-height: 13px; background: #fffaf0; font-weight: normal; overflow: hidden; }
.cells .c, .grid .c { text-align: center; }
.cells .r, .grid .r { text-align: right; padding-right: 3px; }
.cells .v { font-size: 12px; }
.cut { width: 474px; margin-top: -6px; }
.plan { width: 931px; margin-top: 12px; }
.plan th { height: 45px; background: #b0c4de; white-space: normal; padding: 0; }
.plan .d span { display: block; font-size: 8px; margin-bottom: 11px; }
.plan .gap td { height: 5px; line-height: 1px; padding: 0; background: #fff; border-width: 1px 0; }
.plan .sum td { height: 18px; background: #b0c4de; font-size: 12px; text-align: center; }
.plan .sum .big { font-size: 14px; line-height: 16px; text-align: left; }
.plan .sum .r { text-align: right; }
.plan .n { border-style: dotted; font-size: 9px; text-align: center; padding: 0; }
.plan .we, .plan .sum .we { background: repeating-conic-gradient(#a8a8a8 0 25%, #b0c4de 0 50%) 0 0 / 2px 2px; }
.plan .n.we { background: repeating-conic-gradient(#dcdcd8 0 25%, #f6f2ea 0 50%) 0 0 / 2px 2px; }
.plan .cur { background: #c0b8d8; border: 2px solid #101030; }
.sh { margin: 8px 2px 0; }
.totals { width: 419px; }
.totals .b td { background: #b0c4de; }
.totals td { height: 15px; }
.grand { display: flex; padding: 10px 2px; }
.grand b:first-child { width: 330px; }
.grand .v { font-size: 12px; }
.sign { display: flex; gap: 3px; padding-left: 100px; font-size: 12px; }
.sign i { width: 118px; border-bottom: 1px solid #000; }
.payer { margin-left: 7px; padding-left: 3px; border-bottom: 1px solid #000; }

/* record grids */
.listbody { flex: 1; min-height: 0; padding: 8px 7px; }
.listbox { height: 100%; border: 1px solid #989888; background: #fff; display: flex; flex-direction: column; }
.grid { width: 100%; }
.grid th, .grid td { height: 16px; padding: 0 1px; text-align: left; font-weight: normal; white-space: nowrap; overflow: hidden; border: 1px solid #a0a090; border-width: 0 1px 1px 0; }
.grid th { height: 15px; background: #e0e2d0; }
.grid .act { background: #bcbeac; }
.grid .blank td { height: 46px; background: #fff; }
.grid tfoot td { background: #e0e2d0; height: 15px; }
.grid .sel { background: #08306c; color: #fff; outline: 1px dotted #e0a060; outline-offset: -1px; }
.grid .tick { text-align: left; padding-left: 4px; }
.listbox .hscroll { border: 0; height: 13px; }

/* task and status bars */
.taskbar { height: 23px; flex: none; display: flex; gap: 1px; background: #d4d0c8; padding-top: 1px; }
.taskbar button { width: 148px; justify-content: flex-start; gap: 1px; padding-left: 2px; background: #a0a0a0; color: #d4d0c8; border: 1px solid #b8b8b0; }
.taskbar .on { background: #5b7ab5; color: #fff; }
.status { height: 20px; flex: none; display: flex; align-items: center; justify-content: space-between; background: #e0e2d0; border: 1px solid #c4c4b4; padding-left: 3px; }
.status svg { width: 12px; height: 12px; align-self: flex-end; }

/* placement dialog */
.dialog { position: absolute; left: 439px; right: 7px; top: 260px; bottom: 5px; display: flex; flex-direction: column; background: #fff5dc; border: 4px solid #5b7ab5; border-top-width: 1px; border-left-width: 3px; box-shadow: 0 0 0 1px #3858a0; }
.dlgtitle { height: 20px; flex: none; display: flex; align-items: center; gap: 2px; background: #5b7ab5; color: #fff; padding: 0 2px 0 1px; }
.dlgtitle h2 { flex: 1; white-space: nowrap; }
.dlgtitle button, .dlgtitle button svg { width: 12px; height: 12px; }
.dlgbody { flex: 1; min-height: 0; display: flex; flex-direction: column; padding: 7px 7px 9px; }
.dialog label { white-space: nowrap; }
.dlgbody h3 { color: #808078; border-bottom: 1px solid #989080; padding-bottom: 2px; }
.field { display: flex; height: 18px; min-width: 0; border: 1px solid #989888; background: #fff; }
.field input, .field select { flex: 1; min-width: 0; margin: 2px; background: #fff5dc; outline: 0; }
.field button { width: 14px; background: #e0e2d0; border-left: 1px solid #989888; flex: none; }
.field svg { width: 10px; height: 10px; }
.field .dim, .field .dots { border-left: 0; color: #909080; }
.field .dots { align-items: flex-start; }
.long input { font-size: 10px; }
.num input { text-align: right; }
.top { display: grid; grid-template-columns: 75px minmax(0, 1fr) 67px 166px; row-gap: 5px; align-items: center; margin-bottom: 15px; }
.top > label:nth-of-type(2) { padding-left: 9px; }
.check { grid-column: 3 / -1; display: flex; align-items: center; gap: 2px; padding-left: 9px; color: #c8c0a8; }
.check input { appearance: none; width: 13px; height: 13px; background: #fff; border: 1px solid #d0c8b0; }
.params { display: grid; grid-template-columns: minmax(0, 1fr) 21px 192px; column-gap: 10px; margin-top: 10px; align-items: start; }
.params .pr { margin-left: 7px; }
.pl, .pr { display: grid; grid-template-columns: 75px minmax(0, 1fr); row-gap: 6px; align-items: center; }
.pr { grid-template-columns: 85px minmax(0, 1fr); }
.short { width: 83px; }
.find { height: 20px; border: 1px solid #a0a090; background: #e0e2d0; }
.pick { position: relative; background: linear-gradient(90deg, #fff calc(100% - 14px), #e0e2d0 0); }
.pick select { appearance: none; margin-right: 16px; }
.pick::after { content: ""; position: absolute; right: 3px; top: 6px; border: 4px solid transparent; border-top: 5px solid #808078; border-bottom: 0; }
.info { color: #000080; margin-top: 9px; }
.info + h3 { margin-top: 7px; }
.cost { display: grid; grid-template-columns: 77px 88px minmax(0, 1fr) 86px 102px 100px; row-gap: 6px; align-items: center; margin-top: 10px; }
.cost label:nth-of-type(2) { padding-left: 7px; }
.cost label:nth-of-type(3), .cost .col5 { padding-left: 17px; }
.cost .col5 { grid-column: 5; }
.variant { margin: 11px 0 10px; }
.variant a { color: #000080; }
.dtools { display: flex; align-items: center; height: 24px; padding-left: 1px; }
.dgrid { flex: 1; min-height: 0; border: 1px solid #989888; background: #fff; }
.dgrid .sel { background: #000080; outline: 0; }
.dlgfoot { height: 24px; flex: none; display: flex; align-items: center; justify-content: flex-end; background: #e0e2d0; border-top: 1px solid #989080; padding-right: 4px; }
.off { color: #989888; font-weight: bold; }
```
